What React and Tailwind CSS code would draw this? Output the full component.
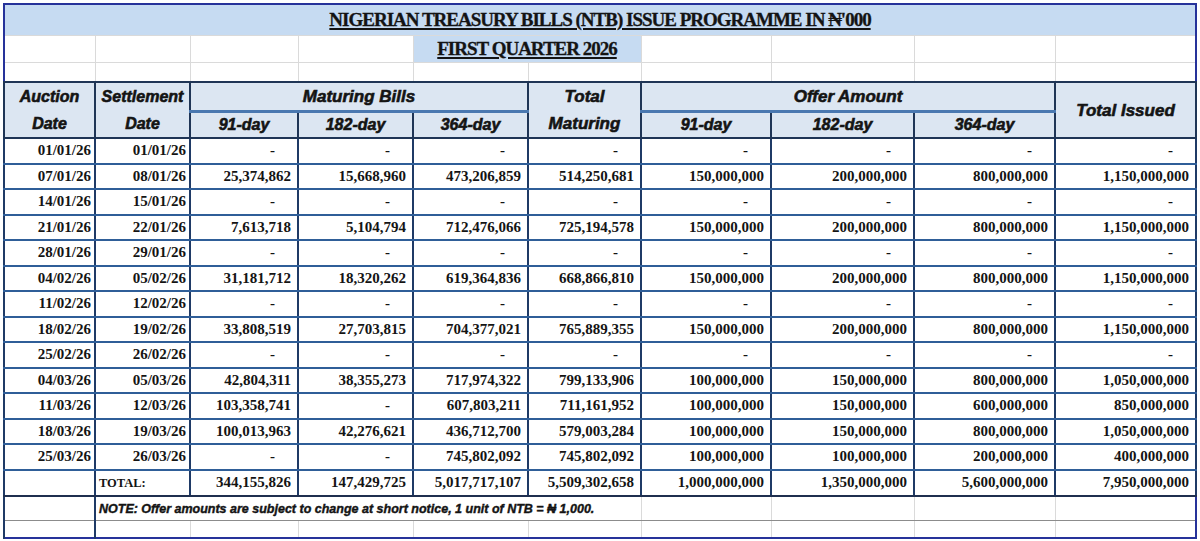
import React from 'react';

const serif = "font-['Liberation_Serif',serif]";
const heavy = "font-['Liberation_Sans',sans-serif] font-bold italic [-webkit-text-stroke:0.6px_#141414]";

const widths = [91, 95, 108, 115, 115, 113, 130, 143, 141, 141];

const D = ['-', '-', '-', '-', '-', '-', '-', '-'];

const rows = [
  ['01/01/26', '01/01/26', ...D],
  ['07/01/26', '08/01/26', '25,374,862', '15,668,960', '473,206,859', '514,250,681', '150,000,000', '200,000,000', '800,000,000', '1,150,000,000'],
  ['14/01/26', '15/01/26', ...D],
  ['21/01/26', '22/01/26', '7,613,718', '5,104,794', '712,476,066', '725,194,578', '150,000,000', '200,000,000', '800,000,000', '1,150,000,000'],
  ['28/01/26', '29/01/26', ...D],
  ['04/02/26', '05/02/26', '31,181,712', '18,320,262', '619,364,836', '668,866,810', '150,000,000', '200,000,000', '800,000,000', '1,150,000,000'],
  ['11/02/26', '12/02/26', ...D],
  ['18/02/26', '19/02/26', '33,808,519', '27,703,815', '704,377,021', '765,889,355', '150,000,000', '200,000,000', '800,000,000', '1,150,000,000'],
  ['25/02/26', '26/02/26', ...D],
  ['04/03/26', '05/03/26', '42,804,311', '38,355,273', '717,974,322', '799,133,906', '100,000,000', '150,000,000', '800,000,000', '1,050,000,000'],
  ['11/03/26', '12/03/26', '103,358,741', '-', '607,803,211', '711,161,952', '100,000,000', '150,000,000', '600,000,000', '850,000,000'],
  ['18/03/26', '19/03/26', '100,013,963', '42,276,621', '436,712,700', '579,003,284', '100,000,000', '150,000,000', '800,000,000', '1,050,000,000'],
  ['25/03/26', '26/03/26', '-', '-', '745,802,092', '745,802,092', '100,000,000', '100,000,000', '200,000,000', '400,000,000'],
];

const totals = ['344,155,826', '147,429,725', '5,017,717,107', '5,509,302,658', '1,000,000,000', '1,350,000,000', '5,600,000,000', '7,950,000,000'];

// spreadsheet cell borders
const light = 'border border-[#dadada] p-0';
const hdr = `border-2 border-[#1f3556] bg-[#dce6f2] text-center align-middle p-0 leading-none text-[16px] ${heavy}`;
const edge = 'border-y-2 border-y-[#2f5e98] border-x-2 border-x-[#1f3a66] align-middle p-0 leading-none';
const cell = `${edge} text-right`;
const title = 'font-bold text-[19px] tracking-[-1px] underline decoration-[1.5px] underline-offset-2 [-webkit-text-stroke:0.3px_#141414]';

const Num = ({ v }) => (
  <td className={cell}>
    <span className={v === '-' ? 'pr-[22px]' : 'pr-[6px]'}>{v}</span>
  </td>
);

const App = () => {
  return (
    <div className="bg-white w-[1200px] h-[541px] pt-[3px] pl-[3px] overflow-hidden">
      <table className={`table-fixed border-collapse border-2 border-[#26329a] w-[1194px] text-[#141414] ${serif}`}>
        <colgroup>
          {widths.map((w, i) => (
            <col key={i} style={{ width: w }} />
          ))}
        </colgroup>
        <tbody>
          <tr className="h-[31px]">
            <td colSpan={10} className="bg-[#c6dbf2] text-center align-middle p-0 leading-none">
              <span className={title}>NIGERIAN TREASURY BILLS (NTB) ISSUE PROGRAMME IN ₦'000</span>
            </td>
          </tr>
          <tr className="h-[27px]">
            <td className={light} />
            <td className={light} />
            <td className={light} />
            <td className={light} />
            <td colSpan={2} className="bg-[#c6dbf2] text-center align-middle p-0 leading-none border border-[#dadada]">
              <span className={title}>FIRST QUARTER 2026</span>
            </td>
            <td className={light} />
            <td className={light} />
            <td className={light} />
            <td className={light} />
          </tr>
          <tr className="h-[20px]">
            {widths.map((_, i) => (
              <td key={i} className={light} />
            ))}
          </tr>

          <tr className="h-[29px]">
            <th rowSpan={2} className={hdr}>
              <div className="leading-[27px]">Auction<br />Date</div>
            </th>
            <th rowSpan={2} className={hdr}>
              <div className="leading-[27px]">Settlement<br />Date</div>
            </th>
            <th colSpan={3} className={`${hdr} border-b-[3px] border-b-[#4a78b0] text-[17px]`}>Maturing Bills</th>
            <th rowSpan={2} className={hdr}>
              <div className="leading-[27px] text-[17px]">Total<br />Maturing</div>
            </th>
            <th colSpan={3} className={`${hdr} border-b-[3px] border-b-[#4a78b0] text-[17px]`}>Offer Amount</th>
            <th rowSpan={2} className={`${hdr} text-[17px]`}>Total Issued</th>
          </tr>
          <tr className="h-[27px]">
            <th className={hdr}>91-day</th>
            <th className={hdr}>182-day</th>
            <th className={hdr}>364-day</th>
            <th className={hdr}>91-day</th>
            <th className={hdr}>182-day</th>
            <th className={hdr}>364-day</th>
          </tr>

          {rows.map((r, i) => (
            <tr key={i} className="h-[25.5px] text-[15px] font-bold">
              <td className={cell}><span className="pr-[3px]">{r[0]}</span></td>
              <td className={cell}><span className="pr-[3px]">{r[1]}</span></td>
              {r.slice(2).map((v, j) => (
                <Num key={j} v={v} />
              ))}
            </tr>
          ))}

          <tr className="h-[26px] text-[15px] font-bold">
            <td className={`${cell} border-b-[#1f2f4f]`} />
            <td className={`${edge} text-left border-b-[#1f2f4f]`}>
              <span className="pl-[3px] text-[12.5px]">TOTAL:</span>
            </td>
            {totals.map((v, j) => (
              <td key={j} className={`${cell} border-b-[#1f2f4f]`}>
                <span className="pr-[6px]">{v}</span>
              </td>
            ))}
          </tr>

          <tr className="h-[25px]">
            <td className="border-x-2 border-x-[#1f3a66] border-b border-b-[#8c8c8c] p-0" />
            <td colSpan={5} className="border-b border-b-[#8c8c8c] p-0 leading-none align-middle whitespace-nowrap overflow-visible">
              <span className="pl-[3px] font-['Liberation_Sans',sans-serif] font-bold italic text-[12.5px] [-webkit-text-stroke:0.4px_#141414]">
                NOTE: Offer amounts are subject to change at short notice, 1 unit of NTB = ₦ 1,000.
              </span>
            </td>
            <td className="border border-[#dadada] border-b-[#8c8c8c] p-0" />
            <td className="border border-[#dadada] border-b-[#8c8c8c] p-0" />
            <td className="border border-[#dadada] border-b-[#8c8c8c] p-0" />
            <td className="border border-[#dadada] border-b-[#8c8c8c] p-0" />
          </tr>

          <tr className="h-[17px]">
            <td className="border-x-2 border-x-[#1f3a66] p-0" />
            {widths.slice(1).map((_, i) => (
              <td key={i} className={light} />
            ))}
          </tr>
        </tbody>
      </table>
    </div>
  );
};

export default App;
